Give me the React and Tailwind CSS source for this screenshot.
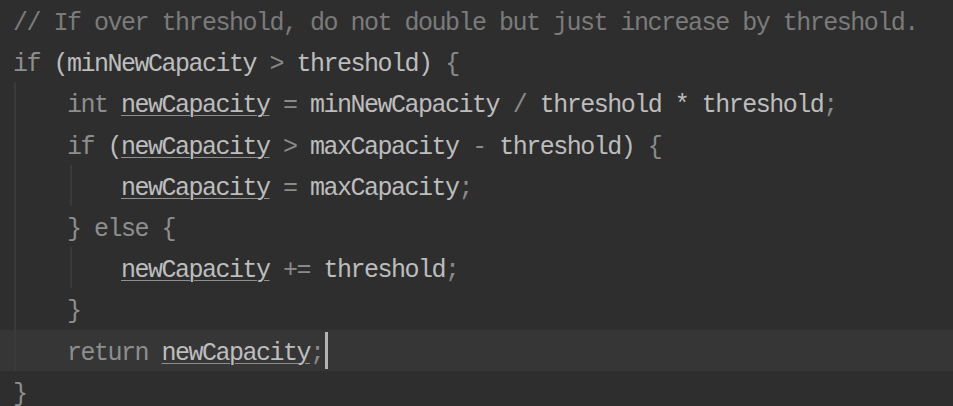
const ID = 'text-[#bdbdbd]';
const KW = 'text-[#8e8e8e]';
const OP = 'text-[#8a8a8a]';
const CM = 'text-[#7b7b7b]';

// one token: [text, kind]
const lines = [
  { indent: 0, guides: [], tokens: [['// If over threshold, do not double but just increase by threshold.', 'cm']] },
  {
    indent: 0,
    guides: [],
    tokens: [['if', 'kw'], [' ', 'id'], ['(minNewCapacity', 'id'], [' > ', 'op'], ['threshold)', 'id'], [' {', 'op']],
  },
  {
    indent: 1,
    guides: [true],
    tokens: [
      ['int', 'kw'], [' ', 'id'], ['newCapacity', 'ul'], [' = ', 'op'], ['minNewCapacity', 'id'],
      [' / ', 'op'], ['threshold', 'id'], [' * ', 'id'], ['threshold', 'id'], [';', 'op'],
    ],
  },
  {
    indent: 1,
    guides: [true],
    tokens: [
      ['if', 'kw'], [' ', 'id'], ['(', 'id'], ['newCapacity', 'ul'], [' > ', 'op'], ['maxCapacity', 'id'],
      [' - ', 'op'], ['threshold)', 'id'], [' {', 'op'],
    ],
  },
  {
    indent: 2,
    guides: [true, true],
    tokens: [['newCapacity', 'ul'], [' = ', 'op'], ['maxCapacity', 'id'], [';', 'op']],
  },
  { indent: 1, guides: [true], tokens: [['} else {', 'kw']] },
  {
    indent: 2,
    guides: [true, true],
    tokens: [['newCapacity', 'ul'], [' += ', 'op'], ['threshold', 'id'], [';', 'op']],
  },
  { indent: 1, guides: [true], tokens: [['}', 'kw']] },
  {
    indent: 1,
    guides: [true],
    current: true,
    tokens: [['return', 'kw'], [' ', 'id'], ['newCapacity', 'ul'], [';', 'op']],
  },
  { indent: 0, guides: [], tokens: [['}', 'kw']] },
];

function Token({ text, kind }) {
  if (kind === 'ul') {
    return (
      <span className={`${ID} underline decoration-[#8f8f8f] decoration-1 underline-offset-[3px]`}>{text}</span>
    );
  }
  const color = kind === 'kw' ? KW : kind === 'op' ? OP : kind === 'cm' ? CM : ID;
  return <span className={color}>{text}</span>;
}

function Indent({ level, guide }) {
  return (
    <span className="flex w-[54px] shrink-0 self-stretch">
      {guide && (
        <span className={`${level === 0 ? 'ml-[1px]' : 'ml-[3px]'} w-[2px] bg-[#3a3a3a]`} />
      )}
    </span>
  );
}

function Line({ line }) {
  return (
    <div
      className={`flex h-[41.2px] items-center pl-[13px] ${line.current ? 'bg-[#363636]' : ''}`}
    >
      {Array.from({ length: line.indent }).map((_, i) => (
        <Indent key={i} level={i} guide={line.guides[i]} />
      ))}
      <span className="mt-[6px] whitespace-pre">
        {line.tokens.map(([text, kind], i) => (
          <Token key={i} text={text} kind={kind} />
        ))}
      </span>
      {line.current && <span className="ml-[1px] h-[37px] w-[3px] bg-[#b4b4b4]" />}
    </div>
  );
}

export default function App() {
  return (
    <div className="h-[406px] w-[953px] overflow-hidden bg-[#2e2e2e] font-['Liberation_Mono',monospace] text-[25px] leading-none tracking-[-1.5px]">
      {lines.map((line, i) => (
        <Line key={i} line={line} />
      ))}
    </div>
  );
}
